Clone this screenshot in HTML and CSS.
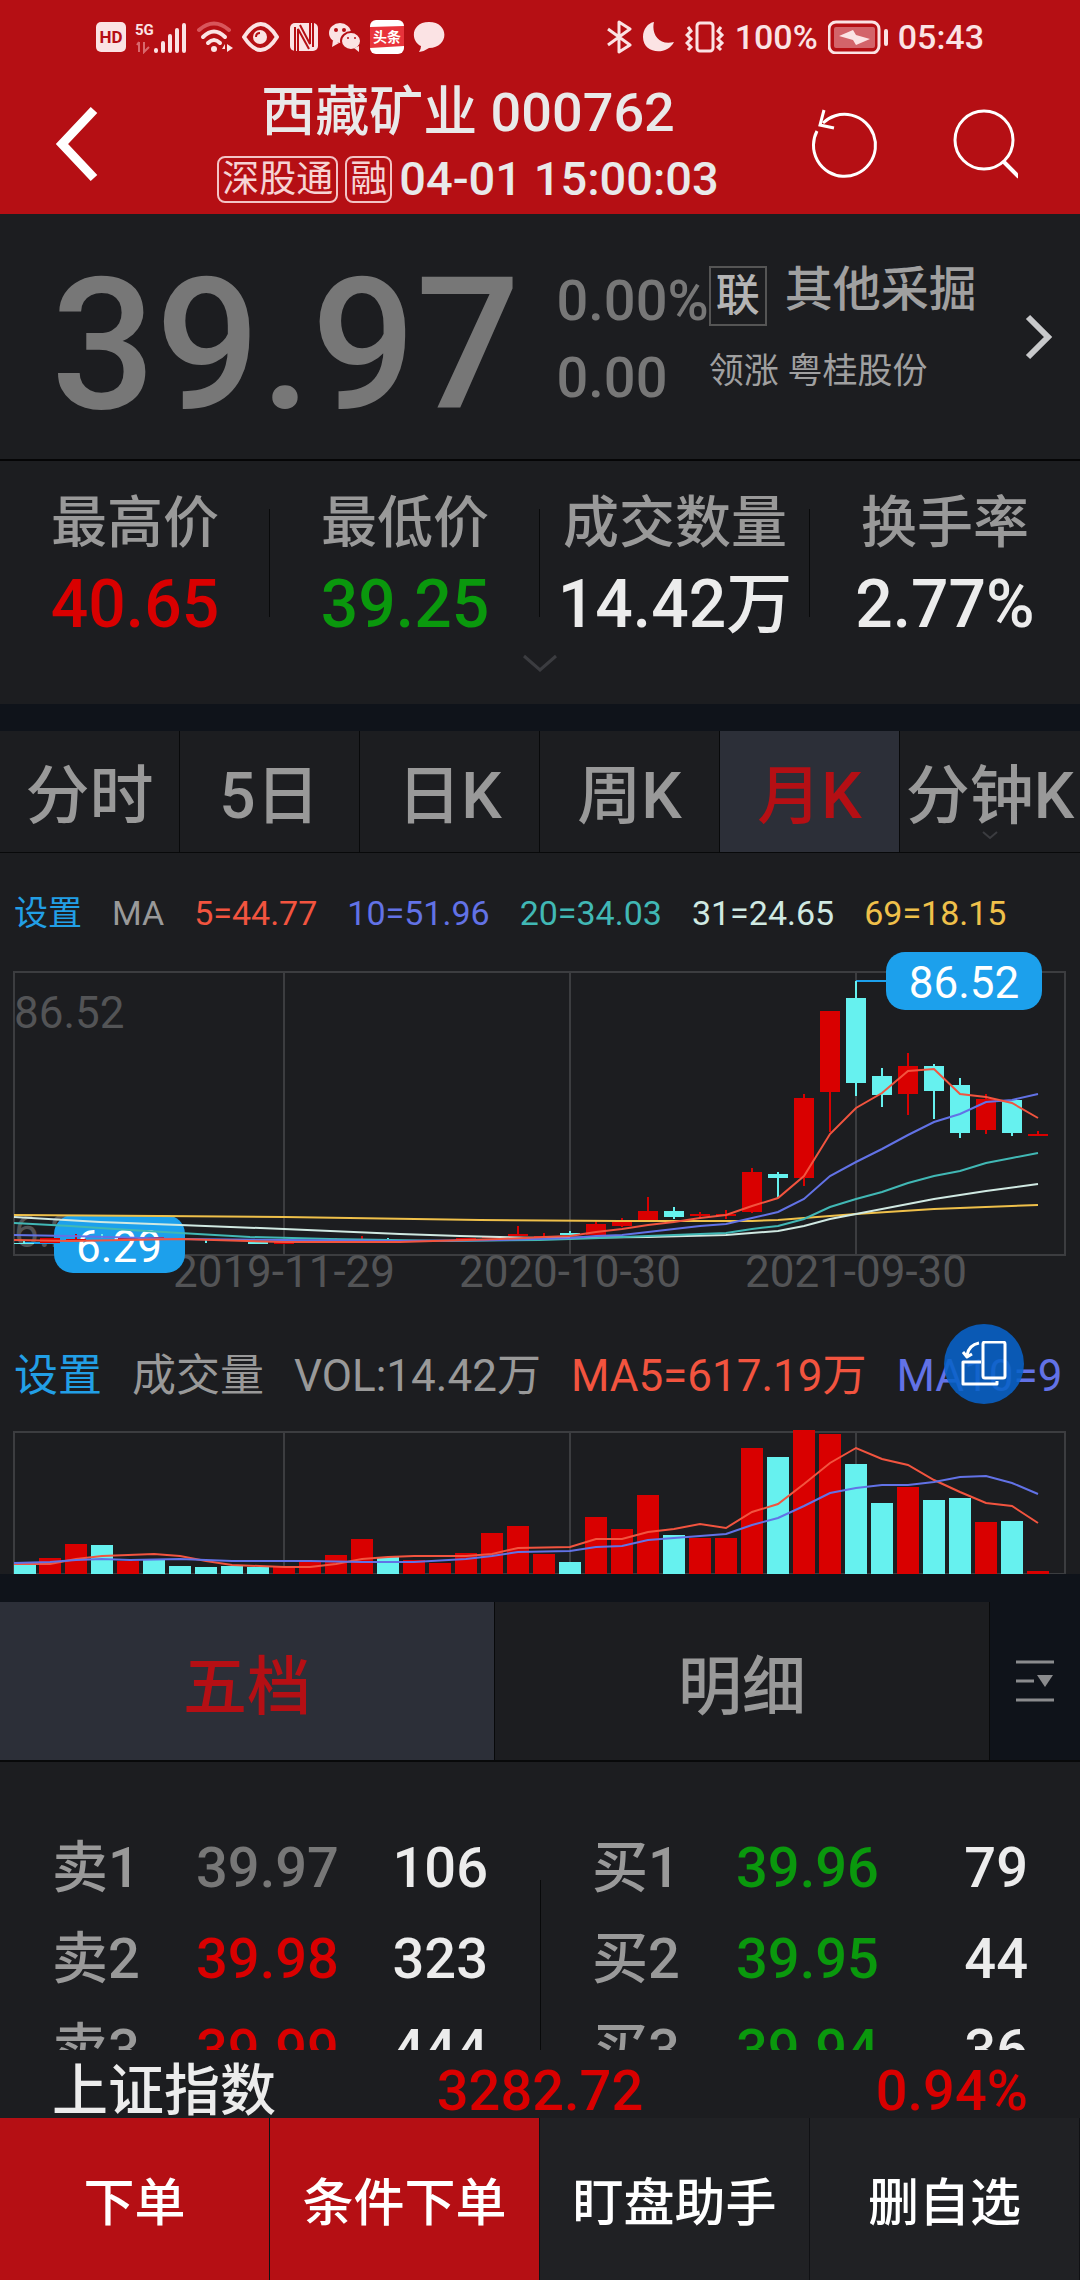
FILE: index.html
```html
<!DOCTYPE html>
<html lang="zh-CN">
<head>
<meta charset="utf-8">
<meta name="viewport" content="width=device-width, initial-scale=1">
<title>西藏矿业 000762</title>
<link rel="stylesheet" href="styles.css">
</head>
<body>
<header class="top">
  <div class="status">
    <div class="status-group">
      <svg width="31" height="34" viewBox="0 0 31 34"><rect y="2" width="30" height="30" rx="5" fill="#fbe3e4"/><text class="svg-bold" x="15" y="23" font-size="17" text-anchor="middle" fill="#b50f14">HD</text></svg>
      <svg width="53" height="34" viewBox="0 0 53 34"><text class="svg-bold" x="0" y="15" font-size="15" fill="#fbe3e4">5G</text><path d="M4 22v10M2 25l2-3M9 22v10l5-5" stroke="#d8696d" stroke-width="2" fill="none"/><path d="M21 30v1M28 23v8M35 16v15M42 10v21M49 5v26" stroke="#fbe3e4" stroke-width="4" stroke-linecap="round"/></svg>
      <svg width="38" height="34" viewBox="0 0 38 34" fill="none" stroke-linecap="round" stroke-width="4"><path d="M3 10Q18-3 33 10" stroke="#d8565b"/><path d="M7 17Q18 6 29 17M12 23Q18 17 24 23" stroke="#fbe3e4"/><circle cx="18" cy="29" r="3" fill="#fbe3e4"/><path d="M26 29h3v-5zM31 24v8l6-4z" fill="#fbe3e4"/></svg>
      <svg width="38" height="34" viewBox="0 0 38 34" fill="none" stroke="#fbe3e4"><path d="M2 17Q19-9 35 17Q19 43 2 17Z" stroke-width="4" stroke-linejoin="round"/><circle cx="18" cy="17" r="7" fill="#fbe3e4" stroke="none"/><path d="M14 17q0-4 4-4" stroke="#b50f14" stroke-width="2"/></svg>
      <svg width="32" height="34" viewBox="0 0 32 34"><rect x="2" y="3" width="28" height="28" rx="5" fill="#fbe3e4"/><path d="M7 31V7M10 32V9l11 20M25 3v24M22 2v22L12 5" fill="none" stroke="#b50f14" stroke-width="2"/></svg>
      <svg width="33" height="34" viewBox="0 0 33 34"><ellipse cx="12" cy="13" rx="11" ry="10" fill="#fbe3e4"/><path d="M5 20l-1 7 7-4" fill="#fbe3e4"/><ellipse cx="23" cy="21" rx="10" ry="9" fill="#fbe3e4" stroke="#b50f14" stroke-width="2"/><path d="M26 28l5 4v-6" fill="#fbe3e4"/><g fill="#b50f14"><circle cx="8" cy="10" r="2"/><circle cx="16" cy="10" r="2"/><circle cx="20" cy="18" r="1"/><circle cx="27" cy="18" r="1"/></g></svg>
      <svg width="36" height="34" viewBox="0 0 36 34"><rect x="1" width="34" height="34" rx="6" fill="#fff"/><path d="M1 7l34-1v20l-34 2z" fill="#e8333b"/><text class="svg-bold" x="18" y="22" font-size="14" text-anchor="middle" fill="#fff">头条</text></svg>
      <svg width="33" height="34" viewBox="0 0 33 34"><path d="M16 2c21 0 20 26 0 26q-4 3-10 4 2-3 2-6C-3 21-2 2 16 2z" fill="#fbe3e4"/></svg>
    </div>
    <div class="status-group status-right">
      <svg width="25" height="34" viewBox="0 0 25 34" fill="none" stroke="#fbe3e4" stroke-width="3" stroke-linejoin="round"><path d="M1 9l22 16-11 7V2l11 7L1 25"/></svg>
      <svg width="33" height="34" viewBox="0 0 33 34"><path d="M12 2C9 14 17 26 32 22 25 36 1 34 1 17 1 9 6 3 12 2z" fill="#fbe3e4"/></svg>
      <svg width="40" height="34" viewBox="0 0 40 34" fill="none" stroke="#fbe3e4" stroke-width="3"><rect x="12" y="3" width="16" height="28" rx="3"/><path d="M3 7l3 4-4 4 4 4-4 4 4 4-3 3M36 7l-3 4 4 4-4 4 4 4-4 4 3 3"/></svg>
      <span>100%</span>
      <svg width="60" height="34" viewBox="0 0 60 34"><rect x="1" y="2" width="50" height="31" rx="7" fill="none" stroke="#fbe3e4" stroke-width="3"/><rect x="6" y="7" width="41" height="21" rx="2" fill="#d3646a"/><path d="M11 16L25 10L28 15L42 19L28 25L25 20z" fill="#fbe3e4"/><path d="M58 11v13" stroke="#fbe3e4" stroke-width="4" stroke-linecap="round"/></svg>
      <span>05:43</span>
    </div>
  </div>
  <nav class="nav">
    <button class="nav-back" aria-label="返回"><svg width="46" height="76" viewBox="0 0 46 76" fill="none" stroke="#fff" stroke-width="9"><path d="M41 4L9 38l32 34"/></svg></button>
    <div class="nav-title">
      <h1>西藏矿业 000762</h1>
      <p><span class="tag">深股通</span><span class="tag">融</span><time>04-01 15:00:03</time></p>
    </div>
    <button class="nav-icon" aria-label="刷新"><svg width="70" height="76" viewBox="0 0 70 76" fill="none" stroke="#fff" stroke-width="3"><path d="M8 25A31 31 0 1 0 14 17"/><path d="M15 4l-4 15 14 3"/></svg></button>
    <button class="nav-icon" aria-label="搜索"><svg width="70" height="76" viewBox="0 0 70 76" fill="none" stroke="#fff" stroke-width="3"><circle cx="36" cy="34" r="29"/><path d="M55 55l16 16" stroke-width="4"/></svg></button>
  </nav>
</header>

<main class="content">
  <section class="quote">
    <strong class="price">39.97</strong>
    <div class="change"><span>0.00%</span><span>0.00</span></div>
    <a class="sector" href="#sector">
      <span class="sector-info">
        <span class="sector-name"><b>联</b>其他采掘</span>
        <span class="sector-lead">领涨 粤桂股份</span>
      </span>
      <svg width="30" height="46" viewBox="0 0 30 46" fill="none" stroke="#c8c9cb" stroke-width="6"><path d="M4 3l20 20L4 43"/></svg>
    </a>
  </section>

  <section class="stats">
    <dl>
      <div><dt>最高价</dt><dd class="up">40.65</dd></div>
      <div><dt>最低价</dt><dd class="down">39.25</dd></div>
      <div><dt>成交数量</dt><dd>14.42万</dd></div>
      <div><dt>换手率</dt><dd>2.77%</dd></div>
    </dl>
    <button class="expand" aria-label="展开"><svg width="36" height="20" viewBox="0 0 36 20" fill="none" stroke="#3b3c40" stroke-width="3"><path d="M2 2l16 14L34 2"/></svg></button>
  </section>

  <nav class="periods">
    <button>分时</button><button>5日</button><button>日K</button><button>周K</button><button class="active">月K</button><button class="minute">分钟K<svg width="16" height="9" viewBox="0 0 16 9" fill="none" stroke="#3b3c40" stroke-width="2"><path d="M1 1l7 6 7-6"/></svg></button>
  </nav>

  <section class="chart">
    <div class="legend">
      <a href="#ma">设置</a><span>MA</span><span class="c5">5=44.77</span><span class="c10">10=51.96</span><span class="c20">20=34.03</span><span class="c31">31=24.65</span><span class="c69">69=18.15</span>
    </div>
    <svg class="plot" viewBox="0 940 1080 360" role="img" aria-label="月K线">
      <path class="frame" d="M14 972H1065V1255H14ZM284 972V1255M570 972V1255M856 972V1255"/>
      <g class="axis">
        <text x="14" y="1028">86.52</text><text x="14" y="1247">6.29</text>
        <g text-anchor="middle"><text x="284" y="1287">2019-11-29</text><text x="570" y="1287">2020-10-30</text><text x="856" y="1287">2021-09-30</text></g>
      </g>
      <path d="M24 1243H60M856 981H890" stroke="#1ca0ec" stroke-width="2"/>
      <g class="badge">
        <rect x="54" y="1215" width="131" height="58" rx="19"/><text x="119" y="1262">6.29</text>
        <rect x="886" y="952" width="156" height="58" rx="19"/><text x="964" y="998">86.52</text>
      </g>
      <g class="candle-up">
        <path class="wick" d="M76 1234V1240M310 1240V1243M336 1238V1243M362 1236V1243M466 1238V1241M518 1226V1236M544 1233V1237M596 1221V1235M622 1218V1227M648 1197V1220M700 1212V1219M726 1210V1219M752 1168V1213M804 1094V1186M830 1011V1132M908 1053V1115M986 1094V1134M1038 1131V1136"/>
        <path class="body" d="M50 1238V1243M76 1239V1241M128 1238V1240M154 1237V1239M284 1242V1244M310 1241V1243M336 1240V1242M466 1238V1240M492 1236V1238M518 1234V1236M544 1236V1238M596 1224V1235M622 1222V1226M648 1211V1220M700 1214V1216M726 1214V1216M752 1172V1212M804 1098V1178M830 1011V1092M908 1066V1094M986 1099V1130M1038 1134V1136"/>
      </g>
      <g class="candle-down">
        <path class="wick" d="M24 1240V1244M102 1234V1238M206 1240V1243M388 1238V1242M570 1231V1235M674 1207V1219M778 1172V1198M856 981V1096M882 1068V1107M934 1064V1119M960 1078V1138M1012 1100V1136"/>
        <path class="body" d="M24 1243V1244M258 1242V1244M388 1241V1243M570 1233V1235M674 1211V1217M778 1174V1178M856 998V1083M882 1076V1095M934 1066V1091M960 1085V1133M1012 1100V1133"/>
      </g>
      <g class="ma">
        <polyline class="c69" points="14,1215 158,1216 284,1217 480,1220 620,1221 752,1221 778,1220 830,1216 856,1214 934,1209 1038,1205"/>
        <polyline class="c31" points="14,1217 100,1222 180,1225 284,1229 400,1234 460,1236 540,1238 648,1237 726,1235 778,1231 804,1226 830,1219 856,1214 908,1204 934,1199 960,1195 986,1191 1038,1184"/>
        <polyline class="c20" points="14,1223 70,1226 130,1230 180,1233 250,1237 330,1239 450,1241 540,1240 600,1238 648,1236 700,1234 726,1233 752,1229 778,1226 804,1219 830,1207 856,1199 882,1192 908,1183 934,1176 960,1171 986,1163 1012,1158 1038,1153"/>
        <polyline class="c10" points="14,1235 70,1236 180,1239 284,1240 400,1241 500,1240 570,1238 596,1236 622,1235 648,1232 674,1229 700,1226 726,1224 752,1218 778,1212 804,1199 830,1176 856,1162 882,1149 908,1135 934,1122 960,1114 986,1102 1012,1100 1038,1094"/>
        <polyline class="c5" points="14,1240 70,1241 180,1239 284,1242 400,1242 500,1239 544,1237 570,1236 596,1232 622,1229 648,1225 674,1222 700,1218 726,1215 752,1206 778,1198 804,1176 830,1134 856,1108 882,1093 908,1071 934,1069 960,1094 986,1097 1012,1103 1038,1118"/>
      </g>
    </svg>
    <div class="volume-head">
      <div class="legend legend-large">
        <a href="#vol">设置</a><span>成交量</span><span>VOL:14.42万</span><span class="c5">MA5=617.19万</span><span class="c10">MA10=9</span>
      </div>
      <button class="rotate" aria-label="横屏"><svg width="46" height="46" viewBox="0 0 46 46" fill="none" stroke="#fff" stroke-width="3" stroke-linejoin="round"><rect x="22" y="1" width="22" height="36" rx="2"/><path d="M20 21H2v22h34v-3M18 2Q8 4 6 14M2 11l4 5 5-3"/></svg></button>
    </div>
    <svg class="plot" viewBox="0 1420 1080 154" role="img" aria-label="成交量">
      <path class="frame" d="M14 1432H1065V1574H14ZM284 1432V1574M570 1432V1574M856 1432V1574"/>
      <path class="volume candle-up" d="M50 1574V1558M76 1574V1544M128 1574V1561M284 1574V1567M310 1574V1562M336 1574V1555M362 1574V1539M414 1574V1560M440 1574V1563M466 1574V1553M492 1574V1533M518 1574V1526M544 1574V1554M596 1574V1517M622 1574V1529M648 1574V1495M700 1574V1538M726 1574V1538M752 1574V1448M804 1574V1430M830 1574V1434M908 1574V1487M986 1574V1522M1038 1574V1571"/>
      <path class="volume candle-down" d="M25 1574V1565M102 1574V1545M154 1574V1559M180 1574V1566M206 1574V1567M232 1574V1566M258 1574V1567M388 1574V1557M570 1574V1562M674 1574V1535M778 1574V1457M856 1574V1464M882 1574V1503M934 1574V1500M960 1574V1498M1012 1574V1521"/>
      <g class="ma">
        <polyline class="c5" points="14,1564 50,1564 76,1559 102,1556 154,1554 180,1556 206,1561 232,1565 284,1567 310,1567 336,1564 362,1559 388,1557 414,1556 466,1556 492,1554 518,1548 570,1547 596,1539 622,1539 648,1532 674,1529 700,1524 726,1528 752,1512 778,1504 804,1484 830,1463 856,1448 882,1459 908,1465 934,1480 960,1492 986,1503 1012,1506 1038,1523"/>
        <polyline class="c10" points="14,1563 50,1562 76,1560 102,1559 130,1560 180,1559 232,1561 310,1561 362,1562 414,1562 466,1559 492,1556 518,1552 570,1551 596,1547 622,1546 648,1540 674,1538 700,1536 726,1534 752,1525 778,1518 804,1506 830,1493 856,1488 882,1485 908,1485 934,1482 960,1477 986,1476 1012,1483 1038,1494"/>
      </g>
    </svg>
  </section>

  <nav class="book-tabs">
    <button class="active">五档</button><button>明细</button>
    <button class="book-menu" aria-label="列表选项"><svg width="38" height="44" viewBox="0 0 38 44"><path d="M0 3H38M0 22H18M0 41H38" stroke="#8a8b8d" stroke-width="3"/><path d="M21 16H37L29 28z" fill="#8a8b8d"/></svg></button>
  </nav>

  <section class="book">
    <table>
      <tr><th scope="row">卖1</th><td class="flat">39.97</td><td>106</td></tr>
      <tr><th scope="row">卖2</th><td class="up">39.98</td><td>323</td></tr>
      <tr><th scope="row">卖3</th><td class="up">39.99</td><td>444</td></tr>
    </table>
    <table>
      <tr><th scope="row">买1</th><td class="down">39.96</td><td>79</td></tr>
      <tr><th scope="row">买2</th><td class="down">39.95</td><td>44</td></tr>
      <tr><th scope="row">买3</th><td class="down">39.94</td><td>36</td></tr>
    </table>
  </section>
</main>

<footer>
  <div class="index"><span>上证指数</span><span class="up">3282.72</span><span class="up">0.94%</span></div>
  <div class="actions"><button class="trade">下单</button><button class="trade">条件下单</button><button>盯盘助手</button><button>删自选</button></div>
</footer>
</body>
</html>
```
FILE: styles.css
```css
* { box-sizing: border-box; }

body {
  margin: 0;
  height: 100vh;
  display: flex;
  flex-direction: column;
  background: #1c1d20;
  color: #ececec;
  font-family: Roboto, "Noto Sans CJK SC", sans-serif;
}

h1, p, dl, dt, dd { margin: 0; font-weight: inherit; }
button { margin: 0; padding: 0; border: 0; background: none; color: inherit; font: inherit; }
a { color: inherit; text-decoration: none; }
svg { display: block; flex: none; }
.svg-bold { font-weight: 700; }

.up { color: #d90000; }
.down { color: #0a980d; }
.flat { color: #777; }

/* Header */
.top { flex: none; background: #b50f14; }
.status {
  display: flex;
  justify-content: space-between;
  align-items: center;
  height: 74px;
  padding: 0 96px;
  color: #fbe3e4;
  font-size: 34px;
  font-weight: 500;
}
.status-group { display: flex; align-items: center; gap: 8px; }
.status-right { gap: 10px; }
.nav { display: flex; align-items: center; height: 140px; padding-right: 28px; }
.nav-back { width: 162px; padding-left: 53px; }
.nav-title { flex: 1; padding-top: 4px; text-align: center; color: #e9e9e9; font-weight: 500; }
.nav-title h1 { font-size: 54px; line-height: 66px; }
.nav-title p { display: flex; justify-content: center; align-items: center; gap: 7px; font-size: 47px; line-height: 66px; }
.tag {
  padding: 0 3px;
  border: 2px solid #f3c4c6;
  border-radius: 8px;
  color: #f6d3d4;
  font-size: 37px;
  font-weight: 400;
  line-height: 43px;
}
.nav-icon { display: flex; justify-content: center; width: 139px; }

/* Quote */
.content { flex: 1; min-height: 0; overflow-y: auto; scrollbar-width: none; }
.quote {
  display: flex;
  align-items: center;
  height: 247px;
  padding: 0 26px 0 51px;
  border-bottom: 2px solid #050506;
}
.price { margin-right: 36px; padding-top: 17px; color: #777; font-size: 184px; font-weight: 500; line-height: 200px; }
.change { display: flex; flex-direction: column; padding-top: 6px; color: #777; font-size: 56px; font-weight: 500; line-height: 77px; }
.sector { flex: 1; display: flex; align-items: center; justify-content: space-between; color: #a0a0a0; }
.sector-info { display: flex; flex-direction: column; gap: 20px; padding-bottom: 10px; }
.sector-name { display: flex; gap: 18px; font-size: 48px; font-weight: 500; line-height: 48px; }
.sector-name b { width: 58px; border: 2px solid #555; color: #b4b4b4; font-size: 44px; font-weight: 500; line-height: 56px; text-align: center; }
.sector-lead { font-size: 35px; line-height: 52px; }

/* Statistics */
.stats { border-bottom: 27px solid #0f131a; }
.stats dl { display: grid; grid-template-columns: repeat(4, 1fr); padding-top: 24px; }
.stats dl div { text-align: center; white-space: nowrap; background: linear-gradient(#08090a, #08090a) right 24px / 1px 108px no-repeat; }
.stats dl div:last-child { background: none; }
.stats dt { color: #999; font-size: 56px; font-weight: 500; line-height: 76px; }
.stats dd { font-size: 66px; font-weight: 500; line-height: 88px; }
.expand { display: flex; justify-content: center; width: 100%; height: 55px; padding-top: 5px; }

/* Chart period tabs */
.periods { display: grid; grid-template-columns: repeat(6, 1fr); border-bottom: 1px solid #08090a; }
.periods button {
  position: relative;
  height: 121px;
  padding-top: 10px;
  border-right: 1px solid #08090a;
  color: #999;
  font-size: 64px;
  font-weight: 500;
  line-height: 111px;
  white-space: nowrap;
}
.periods .active, .book-tabs .active { background: #2c2f38; color: #b50f14; }
.periods .minute { border-right: 0; }
.minute svg { position: absolute; left: 50%; bottom: 12px; margin-left: -8px; }

/* Charts */
.legend { display: flex; gap: 30px; overflow: hidden; padding: 33px 14px 0; color: #999; font-size: 34px; line-height: 54px; white-space: nowrap; }
.legend a { color: #229fe6; }
.legend-large { padding-top: 47px; font-size: 44px; line-height: 58px; }
.plot { width: 100%; height: auto; font-size: 44px; }
.frame { fill: none; stroke: #3c3d40; stroke-width: 2; }
.axis { fill: #535456; }
.badge rect { fill: #1ca0ec; }
.badge text { fill: #fff; text-anchor: middle; }
.wick { stroke-width: 2; }
.body { stroke-width: 20; }
.volume { stroke-width: 22; }
.candle-up { stroke: #d90000; }
.candle-down { stroke: #66f1ef; }
.ma polyline { fill: none; stroke: currentColor; stroke-width: 2; }
.c5 { color: #f2543f; }
.c10 { color: #6272e6; }
.c20 { color: #41b8b5; }
.c31 { color: #d0e9e2; }
.c69 { color: #efc04a; }
.volume-head { position: relative; height: 120px; }
.rotate {
  position: absolute;
  top: 24px;
  right: 56px;
  display: flex;
  align-items: center;
  justify-content: center;
  width: 80px;
  height: 80px;
  border-radius: 50%;
  background: rgba(8, 98, 200, 0.88);
}

/* Order book */
.book-tabs { display: flex; border-top: 28px solid #0f131a; border-bottom: 2px solid #08090a; background: #0f131a; }
.book-tabs button { flex: 1; height: 158px; border-right: 1px solid #08090a; background: #1c1d20; color: #999; font-size: 64px; font-weight: 500; }
.book-tabs .active { background: #2c2f38; color: #b50f14; }
.book-tabs .book-menu { flex: none; display: flex; align-items: center; justify-content: center; width: 90px; border: 0; background: none; }
.book { display: grid; grid-template-columns: 1fr 1fr; padding-top: 61px; background: linear-gradient(#08090a, #08090a) 50% 118px / 1px 100% no-repeat; }
.book table { margin: 0 52px; border-spacing: 0; font-size: 56px; font-weight: 500; line-height: 91px; }
.book th, .book td { padding: 0; text-align: right; }
.book th { width: 144px; color: #999; font-weight: 500; text-align: left; }
.book td:nth-child(2) { width: 144px; text-align: left; }

/* Footer */
footer { flex: none; background: #1c1d20; }
.index { display: grid; grid-template-columns: 1fr 1fr 1fr; padding: 14px 52px 0; font-size: 56px; font-weight: 500; line-height: 54px; }
.index span:nth-child(2) { text-align: center; }
.index span:last-child { text-align: right; }
.actions { display: grid; grid-template-columns: repeat(4, 1fr); }
.actions button { height: 162px; border-right: 1px solid #101114; background: #202124; color: #fff; font-size: 51px; font-weight: 500; }
.actions .trade { background: #b50f14; }
```
